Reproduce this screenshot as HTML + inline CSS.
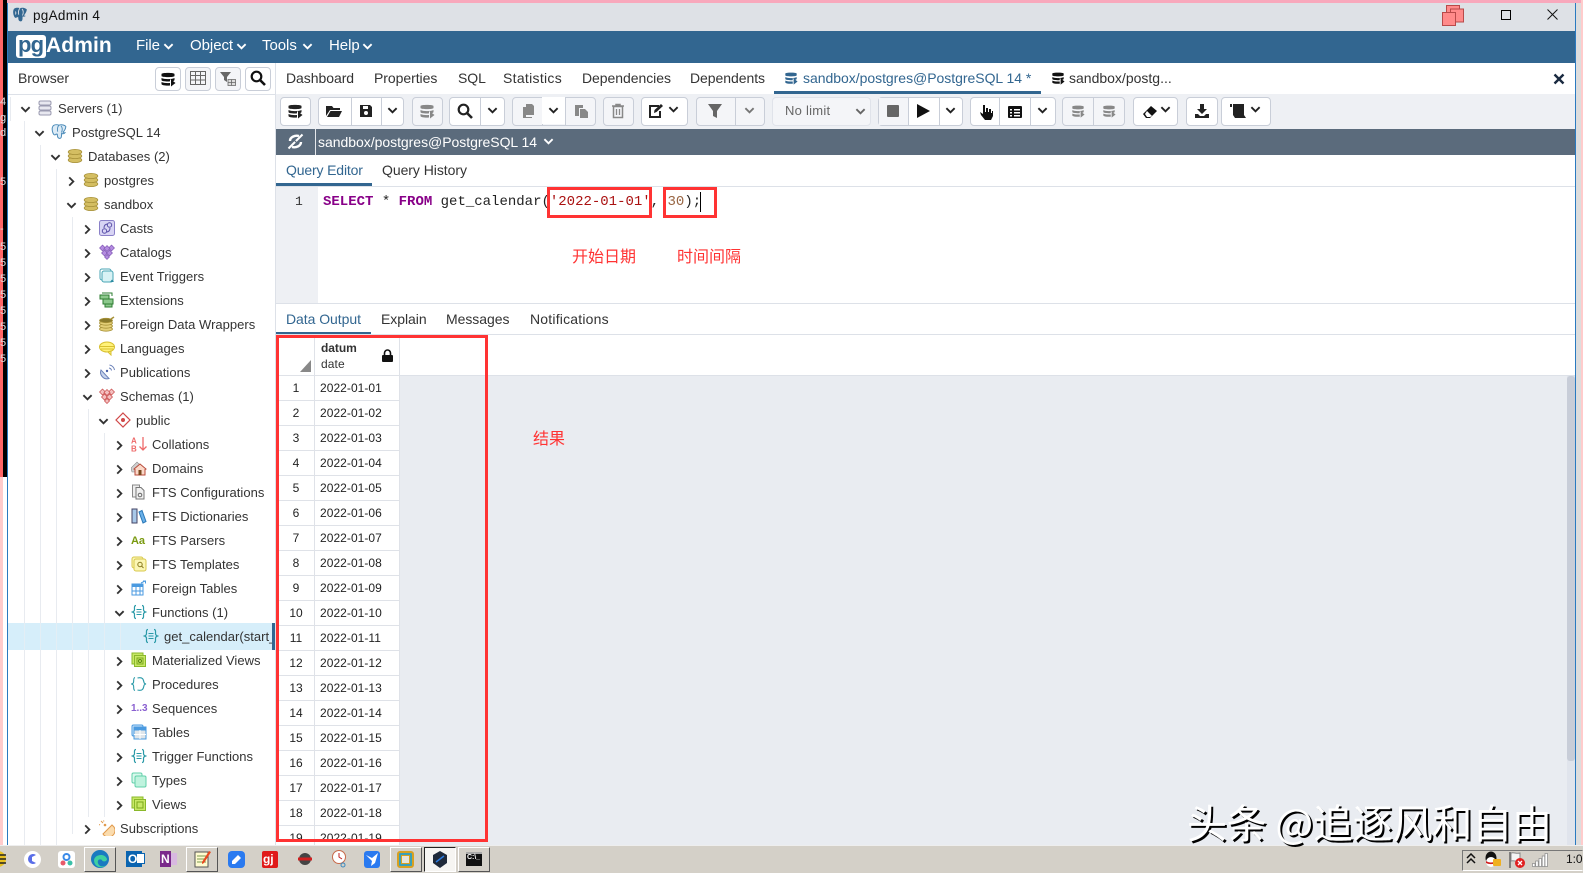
<!DOCTYPE html>
<html><head><meta charset="utf-8"><title>pgAdmin 4</title>
<style>
html,body{margin:0;padding:0;width:1583px;height:873px;overflow:hidden;background:#fff}
body{position:relative;font-family:"Liberation Sans","Noto Sans CJK SC",sans-serif;color:#222}
.a,.t,.r,.i,.b,.c,.n,.d,.g,.tb{position:absolute}
.t{white-space:nowrap;font-size:14px;line-height:18px;letter-spacing:-.05px}
.r{font-size:13px;line-height:24px;white-space:nowrap;color:#333;letter-spacing:.02px}
.g{width:1px;background:#e8ebf0}
.i{width:16px;height:16px}
.b{top:97px;height:27px;border:1px solid #c9ced8;border-radius:4px;background:#fff;box-sizing:content-box}
.b.dis{background:#f4f5f8}
.b i{position:absolute;top:0;bottom:0;width:1px;background:#c9ced8}
.c{width:11px;height:11px}
.n{left:278px;width:36px;height:24px;background:#fff;font-size:12px;line-height:24px;text-align:center;color:#222}
.d{left:315px;width:84px;height:24px;background:#fff;font-size:12px;line-height:24px;color:#222;text-indent:5px;letter-spacing:.05px}
.tb{top:845px}
.btn3{position:absolute;top:847px;height:25px;box-sizing:border-box;width:32px;border:1px solid;border-color:#fff #555 #555 #fff;background:#d4d0c8}
.red{position:absolute;border:3px solid #f33;box-sizing:border-box}
.zh{position:absolute;color:#f33;font-size:16px;line-height:20px;font-family:"Noto Sans CJK SC",sans-serif;white-space:nowrap}
.stripe{position:absolute;left:0;font-size:11px;line-height:12px;color:#ddd;font-family:"Liberation Sans",sans-serif}
</style></head><body>
<svg width="0" height="0" style="position:absolute">
<defs>
<symbol id="dn" viewBox="0 0 12 12"><path d="M1.500 3.500 6 8l4.500-4.500" fill="none" stroke="currentColor" stroke-width="2"/></symbol>
<symbol id="rt" viewBox="0 0 12 12"><path d="M3.500 1.500 8 6l-4.500 4.500" fill="none" stroke="currentColor" stroke-width="2"/></symbol>
<symbol id="db" viewBox="0 0 16 16"><g fill="#d4be62" stroke="#a8923a" stroke-width=".8"><ellipse cx="8" cy="12" rx="6.800" ry="2.600"/><ellipse cx="8" cy="8" rx="6.800" ry="2.600"/><ellipse cx="8" cy="4" rx="6.800" ry="2.600"/></g></symbol>
<symbol id="srv" viewBox="0 0 16 16"><g fill="#e8e8f0" stroke="#9a9ab0"><rect x="2" y="1" width="12" height="4" rx="1.500"/><rect x="2" y="6" width="12" height="4" rx="1.500"/><rect x="2" y="11" width="12" height="4" rx="1.500"/></g></symbol>
<symbol id="pg" viewBox="0 0 16 16"><path d="M8 1.200C6.500.6 4 .5 2.600 1.400.8 2.600.9 6 1.800 8.600c.5 1.500 1.300 2.600 2.400 2.200.5-.2.8-.5 1-.8.4.3.8.4 1.100.3 0 1.500 0 3.500 1.700 4 1.600.4 2.400-.6 2.500-2.400l.1-2.400c1.200.4 2.600.1 3.300-.7-.9.1-1.500-.1-1.800-.6 1.300-1.500 2.700-4 2.700-5.800C14 1.500 11 0 8 1.200z" fill="#dcebf6" stroke="#4a8ab8" stroke-width="1"/><path d="M8 1.200c-1.500 1.500-1.800 4-1.300 6.500M10 2c1.500 1.500 1.500 4 .5 6.500" fill="none" stroke="#4a8ab8" stroke-width=".9"/></symbol>
<symbol id="pgd" viewBox="0 0 16 16"><path d="M8 1.200C6.500.6 4 .5 2.600 1.400.8 2.600.9 6 1.800 8.600c.5 1.500 1.300 2.600 2.400 2.200.5-.2.8-.5 1-.8.4.3.8.4 1.100.3 0 1.500 0 3.500 1.700 4 1.600.4 2.400-.6 2.500-2.400l.1-2.400c1.200.4 2.600.1 3.300-.7-.9.1-1.500-.1-1.800-.6 1.300-1.500 2.700-4 2.700-5.800C14 1.500 11 0 8 1.200z" fill="#336791"/><path d="M8 1.200c-1.500 1.500-1.800 4-1.300 6.500M10 2c1.500 1.500 1.500 4 .5 6.500M3.500 4.500c.5 1 .5 2 0 3" fill="none" stroke="#dee1e6" stroke-width=".9"/></symbol>
<symbol id="cast" viewBox="0 0 16 16"><rect x=".5" y=".5" width="15" height="15" rx="2" fill="#d8d4f4" stroke="#8a80c8"/><circle cx="10.500" cy="5" r="2.200" fill="none" stroke="#5a50a8"/><circle cx="5.500" cy="11" r="2.200" fill="none" stroke="#5a50a8"/><path d="M5 8c0-3 2-4 4-4M11 8c0 3-2 4-4 4" fill="none" stroke="#5a50a8"/></symbol>
<symbol id="cat" viewBox="0 0 16 16"><g fill="#b48ce0" stroke="#7a50b0" stroke-width=".6"><path d="M3.500 1 6.500 4 3.500 7 .5 4z"/><path d="M12.500 1l3 3-3 3-3-3z"/><path d="M8 1.500 11 4.500 8 7.500 5 4.500z"/><path d="M5.500 6 8.500 9 5.500 12 2.500 9z"/><path d="M10.500 6l3 3-3 3-3-3z"/><path d="M8 10.500 10.500 13 8 15.500 5.500 13z"/></g></symbol>
<symbol id="sch" viewBox="0 0 16 16"><g fill="#f4c0c0" stroke="#c84848" stroke-width=".7"><path d="M3.500 1 6.500 4 3.500 7 .5 4z"/><path d="M12.500 1l3 3-3 3-3-3z"/><path d="M8 1.500 11 4.500 8 7.500 5 4.500z"/><path d="M5.500 6 8.500 9 5.500 12 2.500 9z"/><path d="M10.500 6l3 3-3 3-3-3z"/><path d="M8 10.500 10.500 13 8 15.500 5.500 13z"/></g></symbol>
<symbol id="ev" viewBox="0 0 16 16"><rect x="1" y="1" width="11" height="11" rx="2" fill="#fff" stroke="#49a5b5"/><rect x="3" y="3" width="11" height="11" rx="2" fill="#d8f2f5" stroke="#49a5b5"/><path d="M11 14h4l-2-2.500z" fill="#2a8aa0"/></symbol>
<symbol id="ext" viewBox="0 0 16 16"><path d="M1 3h9v4H1zM4 7h10v5H4zM6 12h7v3H6z" fill="#8cc88c" stroke="#2e7d32"/><path d="M3 1h10v3" fill="none" stroke="#2e7d32"/></symbol>
<symbol id="fdw" viewBox="0 0 16 16"><g fill="#e4cf78" stroke="#a89238" stroke-width=".8"><ellipse cx="7" cy="13" rx="6.500" ry="2.200"/><ellipse cx="7" cy="10" rx="6.500" ry="2.200"/><ellipse cx="7" cy="7" rx="6.500" ry="2.200"/><ellipse cx="7" cy="4.500" rx="6.500" ry="2.200" fill="#8a7a2c"/></g><path d="M12 3 15 1" stroke="#a89238" stroke-width="1.500"/></symbol>
<symbol id="lang" viewBox="0 0 16 16"><ellipse cx="8" cy="7" rx="7.500" ry="5" fill="#fff27a" stroke="#d8c030"/><path d="M1 6.500h14M2 9h12" stroke="#d8c030" fill="none"/><path d="M9 12l3 3v-4z" fill="#fff27a" stroke="#d8c030"/></symbol>
<symbol id="pub" viewBox="0 0 16 16"><path d="M2 6a6.500 6.500 0 0 0 8 8.500z" fill="#c8d4ec" stroke="#6a80b8"/><circle cx="8" cy="7" r="1.200" fill="#4a60a8"/><path d="M10 4a3 3 0 0 1 2.500 2.500M10.500 1a6 6 0 0 1 5 5" fill="none" stroke="#6a80b8"/></symbol>
<symbol id="pub2" viewBox="0 0 16 16"><path d="M15 7a6.500 6.500 0 0 1-11 7L13 5z" fill="#fbdcae" stroke="#e09a4c"/><circle cx="6" cy="5" r="1.300" fill="#e09a4c"/><path d="M4 3 2 1M1 5l-1-.5M5 1.500 4.500.5" stroke="#e09a4c" fill="none"/></symbol>
<symbol id="pub3" viewBox="0 0 16 16"><path d="M8 1 15 8 8 15 1 8z" fill="#fff" stroke="#d04848" stroke-width="1.200"/><circle cx="8" cy="8" r="2" fill="#d04848"/></symbol>
<symbol id="coll" viewBox="0 0 16 16"><text x="0" y="7.500" font-size="8" font-weight="bold" fill="#ee6a6a" font-family="Liberation Sans">A</text><text x="0" y="15.500" font-size="8" font-weight="bold" fill="#ee6a6a" font-family="Liberation Sans">B</text><path d="M12 1v13M8.500 10.500 12 14l3.500-3.500" fill="none" stroke="#ee6a6a" stroke-width="1.300"/></symbol>
<symbol id="dom" viewBox="0 0 16 16"><path d="M0 8 6 2l3 3-5 4v3H1z" fill="#d0d0d0" stroke="#888" stroke-width=".6"/><path d="M3 9l6-5 6 5-1 .5V15H4V9.500z" fill="#fbd8c8" stroke="#b84a3a"/><rect x="7.500" y="10" width="3" height="5" fill="#7a4a20"/></symbol>
<symbol id="cfg" viewBox="0 0 16 16"><rect x="1.500" y="1" width="7" height="12" fill="#eee" stroke="#888"/><path d="M5 3.500h5l3 3V15H5z" fill="#f0f0f0" stroke="#777"/><circle cx="9" cy="11" r="1.800" fill="none" stroke="#666"/></symbol>
<symbol id="dic" viewBox="0 0 16 16"><rect x="1" y="1" width="5" height="14" fill="#a8c8e8" stroke="#446"/><path d="M8 4l3-1.500 4 11-3 1.500z" fill="#6ab0e8" stroke="#2a78b8"/></symbol>
<symbol id="tpl" viewBox="0 0 16 16"><rect x="1" y="1" width="11" height="11" rx="2" fill="#fbf6b4" stroke="#d8c84c"/><rect x="3" y="3" width="12" height="12" rx="2" fill="#fbf6b4" stroke="#d8c84c"/><circle cx="9" cy="8.500" r="2.200" fill="none" stroke="#8a7a20"/><path d="M10.500 10l2 2" stroke="#8a7a20"/></symbol>
<symbol id="ftb" viewBox="0 0 16 16"><rect x="1" y="4" width="11" height="11" fill="#fff" stroke="#4a9ae0"/><path d="M1 4h11v3H1z" fill="#4a9ae0"/><path d="M5 7v8M1 11h11M9 7v8" stroke="#4a9ae0" fill="none"/><path d="M10 3l4-2M12 1h2.500v2.500" fill="none" stroke="#4a9ae0"/></symbol>
<symbol id="fn" viewBox="0 0 16 16"><path d="M5 1.500C3 1.500 3.500 4 3.500 5.500S3 7.500 1.500 8C3 8.500 3.500 9 3.500 10.500S3 14.500 5 14.500M11 1.500c2 0 1.500 2.500 1.500 4S13 7.500 14.500 8C13 8.500 12.500 9 12.500 10.500s.5 4-1.500 4" fill="none" stroke="#2a9aa8" stroke-width="1.200"/><path d="M5.500 5.500h5M5.500 8h5M5.500 10.500h5" stroke="#2a9aa8" fill="none"/></symbol>
<symbol id="fn2" viewBox="0 0 16 16"><path d="M4 1.500C2 2 3 5 2.500 6.500 2.300 7.400 1.500 7.700.5 8c1 .3 1.800.6 2 1.500C3 11 2 14 4 14.500M6.500 2c5.500-1.500 6 2 6.500 4.500.2 1 1 1.300 2 1.500-1 .2-1.800.5-2 1.500-.5 2.500-1 6-6.500 4.500" fill="none" stroke="#2a9aa8" stroke-width="1.100"/></symbol>
<symbol id="mv" viewBox="0 0 16 16"><rect x="1" y="1" width="11" height="11" fill="#c8e866" stroke="#8ab82a"/><rect x="3.500" y="3.500" width="11" height="11" fill="#c8e866" stroke="#8ab82a"/><rect x="6" y="6" width="6" height="6" fill="none" stroke="#7aa81a"/><circle cx="9" cy="9" r="1.500" fill="none" stroke="#5a8a10"/></symbol>
<symbol id="tb" viewBox="0 0 16 16"><rect x="1" y="1" width="11" height="11" rx="1.500" fill="#cfe6fa" stroke="#4a9ae0"/><rect x="3" y="3" width="12" height="12" fill="#dfe5ea" stroke="#4a9ae0"/><path d="M3 3h12v3.500H3z" fill="#4a9ae0"/><path d="M9 6v9M3 10.500h12" stroke="#fff" fill="none"/></symbol>
<symbol id="ty" viewBox="0 0 16 16"><rect x="1" y="1" width="10" height="10" rx="1.500" fill="#d8f8ec" stroke="#62d0aa"/><rect x="4" y="4" width="11" height="11" rx="1.500" fill="#bff3de" stroke="#62d0aa"/></symbol>
<symbol id="vw" viewBox="0 0 16 16"><rect x="1" y="1" width="11" height="11" fill="#c8e866" stroke="#8ab82a"/><rect x="3.500" y="3.500" width="11" height="11" fill="#c8e866" stroke="#8ab82a"/><rect x="6" y="6" width="6" height="6" fill="none" stroke="#7aa81a"/></symbol>
<symbol id="dbb" viewBox="0 0 16 16"><path d="M1.500 3C1.500 1.500 14.500 1.500 14.500 3v2c0 1.500-13 1.500-13 0zM1.500 7c3 1.500 10 1.500 13 0v2c0 .5-1 1-2 1.200L10 8v2.400c-3 .3-8.500 0-8.500-1.400zM1.500 11c2 1 6 1.200 8.500 1v2.500c-3 .3-8.500 0-8.500-1.500zM11 8.500l4.500 3.500-4.500 3.500z" fill="currentColor"/></symbol>
</defs>
</svg>

<!-- frame -->
<div class="a" style="left:0;top:0;width:1583px;height:3px;background:#f8a8bc"></div>
<div class="a" style="left:0;top:0;width:3px;height:477px;background:#f66"></div>
<div class="a" style="left:3px;top:0;width:4px;height:477px;background:#000"></div>
<div class="a" style="left:0;top:477px;width:3px;height:368px;background:#fcc"></div>
<div class="a" style="left:7px;top:3px;width:1px;height:842px;background:#2a7ac0"></div>
<div class="a" style="left:1575px;top:3px;width:1px;height:842px;background:#2a7ac0"></div>
<div class="a" style="left:1576px;top:3px;width:5px;height:842px;background:#ddd"></div>
<div class="a" style="left:1581px;top:0;width:2px;height:845px;background:#fcc"></div>
<div class="stripe" style="top:96px">4</div><div class="stripe" style="top:112px">g</div><div class="stripe" style="top:127px">d</div><div class="stripe" style="top:176px">5</div><div class="stripe" style="top:223px">-</div><div class="stripe" style="top:241px">5</div><div class="stripe" style="top:257px">5</div><div class="stripe" style="top:273px">5</div><div class="stripe" style="top:289px">5</div><div class="stripe" style="top:305px">5</div><div class="stripe" style="top:321px">5</div><div class="stripe" style="top:337px">5</div><div class="stripe" style="top:353px">5</div>

<!-- title bar -->
<div class="a" style="left:8px;top:3px;width:1567px;height:28px;background:#dee1e6"></div>
<svg class="i" style="left:12px;top:7px"><use href="#pgd"/></svg>
<div class="t" style="left:33px;top:7px;font-size:13.5px;letter-spacing:.3px;color:#111">pgAdmin 4</div>
<svg class="a" style="left:1442px;top:4px" width="24" height="23" viewBox="0 0 24 23"><g fill="#ff8a8a" stroke="#b84a4a"><rect x="4.500" y="1.500" width="13" height="13"/><rect x="8.500" y="5" width="13" height="13"/><rect x=".5" y="8.500" width="13" height="13"/></g></svg>
<div class="a" style="left:1501px;top:10px;width:8px;height:8px;border:1px solid #000"></div>
<svg class="a" style="left:1547px;top:9px" width="11" height="11" viewBox="0 0 11 11"><path d="M.5.5l10 10M10.500.5l-10 10" stroke="#111"/></svg>

<!-- nav -->
<div class="a" style="left:8px;top:31px;width:1567px;height:32px;background:#326690"></div>
<div class="a" style="left:16px;top:35px;width:30px;height:23px;background:#fff;border-radius:3px"></div>
<div class="t" style="left:18px;top:33px;font-size:22px;line-height:24px;font-weight:bold;color:#326690;letter-spacing:-.8px">pg</div>
<div class="t" style="left:46px;top:34px;font-size:21px;line-height:24px;font-weight:bold;color:#fff;letter-spacing:.1px">Admin</div>
<div class="t" style="left:136px;top:37px;font-size:15px;color:#fff">File</div><svg class="c" style="left:163px;top:41px;color:#fff"><use href="#dn"/></svg>
<div class="t" style="left:190px;top:37px;font-size:15px;color:#fff">Object</div><svg class="c" style="left:236px;top:41px;color:#fff"><use href="#dn"/></svg>
<div class="t" style="left:262px;top:37px;font-size:15px;color:#fff">Tools</div><svg class="c" style="left:302px;top:41px;color:#fff"><use href="#dn"/></svg>
<div class="t" style="left:329px;top:37px;font-size:15px;color:#fff">Help</div><svg class="c" style="left:362px;top:41px;color:#fff"><use href="#dn"/></svg>

<!-- browser header -->
<div class="t" style="left:18px;top:69px;color:#333">Browser</div>
<div class="a" style="left:8px;top:94px;width:267px;height:1px;background:#dde1e8"></div>
<div class="a" style="left:275px;top:63px;width:1px;height:782px;background:#dde1e8"></div>
<div class="b" style="left:155px;top:67px;width:24px;height:22px"></div><svg class="i" style="left:160px;top:71px;color:#111"><use href="#dbb"/></svg>
<div class="b dis" style="left:185px;top:67px;width:24px;height:22px"></div><svg class="i" style="left:190px;top:70px" viewBox="0 0 16 16"><path d="M.5 1.500h15v13H.5zM.5 5.500h15M.5 10h15M5.500 1.500v13M10.500 1.500v13" fill="none" stroke="#666"/></svg>
<div class="b dis" style="left:215px;top:67px;width:24px;height:22px"></div><svg class="i" style="left:220px;top:71px" viewBox="0 0 16 16"><path d="M0 1h11L7 6v5L4 9V6z" fill="#666"/><path d="M8 8.500h7.500v6H8zM8 11.500h7.500M11.500 8.500v6" fill="#ddd" stroke="#666" stroke-width=".8"/></svg>
<div class="b" style="left:245px;top:67px;width:24px;height:22px"></div><svg class="i" style="left:250px;top:70px" viewBox="0 0 16 16"><circle cx="6.500" cy="6.500" r="4.800" fill="none" stroke="#111" stroke-width="2.200"/><path d="M10 10l5 5" stroke="#111" stroke-width="2.600"/></svg>

<!-- tree guides -->
<div class="g" style="left:10px;top:97px;height:24px"></div>
<div class="g" style="left:24px;top:121px;height:724px"></div>
<div class="g" style="left:40px;top:145px;height:700px"></div>
<div class="g" style="left:56px;top:169px;height:676px"></div>
<div class="g" style="left:72px;top:217px;height:617px"></div>
<div class="g" style="left:88px;top:409px;height:408px"></div>
<div class="g" style="left:104px;top:433px;height:384px"></div>
<!-- selected -->
<div class="a" style="left:8px;top:623px;width:264px;height:27px;background:#d6eefa"></div>
<div class="a" style="left:272px;top:623px;width:3px;height:27px;background:#326690"></div>
<div class="g" style="left:24px;top:623px;height:27px;background:#e3eef5"></div><div class="g" style="left:40px;top:623px;height:27px;background:#e3eef5"></div><div class="g" style="left:56px;top:623px;height:27px;background:#e3eef5"></div><div class="g" style="left:72px;top:623px;height:27px;background:#e3eef5"></div><div class="g" style="left:88px;top:623px;height:27px;background:#e3eef5"></div><div class="g" style="left:104px;top:623px;height:27px;background:#e3eef5"></div><div class="g" style="left:120px;top:623px;height:27px;background:#e3eef5"></div>

<!-- tree rows -->
<svg class="c" style="left:20px;top:104px;color:#333"><use href="#dn"/></svg><svg class="i" style="left:37px;top:100px"><use href="#srv"/></svg><div class="r" style="left:58px;top:97px">Servers (1)</div>
<svg class="c" style="left:34px;top:128px;color:#333"><use href="#dn"/></svg><svg class="i" style="left:51px;top:124px"><use href="#pg"/></svg><div class="r" style="left:72px;top:121px">PostgreSQL 14</div>
<svg class="c" style="left:50px;top:152px;color:#333"><use href="#dn"/></svg><svg class="i" style="left:67px;top:148px"><use href="#db"/></svg><div class="r" style="left:88px;top:145px">Databases (2)</div>
<svg class="c" style="left:66px;top:176px;color:#333"><use href="#rt"/></svg><svg class="i" style="left:83px;top:172px"><use href="#db"/></svg><div class="r" style="left:104px;top:169px">postgres</div>
<svg class="c" style="left:66px;top:200px;color:#333"><use href="#dn"/></svg><svg class="i" style="left:83px;top:196px"><use href="#db"/></svg><div class="r" style="left:104px;top:193px">sandbox</div>
<svg class="c" style="left:82px;top:224px;color:#333"><use href="#rt"/></svg><svg class="i" style="left:99px;top:220px"><use href="#cast"/></svg><div class="r" style="left:120px;top:217px">Casts</div>
<svg class="c" style="left:82px;top:248px;color:#333"><use href="#rt"/></svg><svg class="i" style="left:99px;top:244px"><use href="#cat"/></svg><div class="r" style="left:120px;top:241px">Catalogs</div>
<svg class="c" style="left:82px;top:272px;color:#333"><use href="#rt"/></svg><svg class="i" style="left:99px;top:268px"><use href="#ev"/></svg><div class="r" style="left:120px;top:265px">Event Triggers</div>
<svg class="c" style="left:82px;top:296px;color:#333"><use href="#rt"/></svg><svg class="i" style="left:99px;top:292px"><use href="#ext"/></svg><div class="r" style="left:120px;top:289px">Extensions</div>
<svg class="c" style="left:82px;top:320px;color:#333"><use href="#rt"/></svg><svg class="i" style="left:99px;top:316px"><use href="#fdw"/></svg><div class="r" style="left:120px;top:313px">Foreign Data Wrappers</div>
<svg class="c" style="left:82px;top:344px;color:#333"><use href="#rt"/></svg><svg class="i" style="left:99px;top:340px"><use href="#lang"/></svg><div class="r" style="left:120px;top:337px">Languages</div>
<svg class="c" style="left:82px;top:368px;color:#333"><use href="#rt"/></svg><svg class="i" style="left:99px;top:364px"><use href="#pub"/></svg><div class="r" style="left:120px;top:361px">Publications</div>
<svg class="c" style="left:82px;top:392px;color:#333"><use href="#dn"/></svg><svg class="i" style="left:99px;top:388px"><use href="#sch"/></svg><div class="r" style="left:120px;top:385px">Schemas (1)</div>
<svg class="c" style="left:98px;top:416px;color:#333"><use href="#dn"/></svg><svg class="i" style="left:115px;top:412px"><use href="#pub3"/></svg><div class="r" style="left:136px;top:409px">public</div>
<svg class="c" style="left:114px;top:440px;color:#333"><use href="#rt"/></svg><svg class="i" style="left:131px;top:436px"><use href="#coll"/></svg><div class="r" style="left:152px;top:433px">Collations</div>
<svg class="c" style="left:114px;top:464px;color:#333"><use href="#rt"/></svg><svg class="i" style="left:131px;top:460px"><use href="#dom"/></svg><div class="r" style="left:152px;top:457px">Domains</div>
<svg class="c" style="left:114px;top:488px;color:#333"><use href="#rt"/></svg><svg class="i" style="left:131px;top:484px"><use href="#cfg"/></svg><div class="r" style="left:152px;top:481px">FTS Configurations</div>
<svg class="c" style="left:114px;top:512px;color:#333"><use href="#rt"/></svg><svg class="i" style="left:131px;top:508px"><use href="#dic"/></svg><div class="r" style="left:152px;top:505px">FTS Dictionaries</div>
<svg class="c" style="left:114px;top:536px;color:#333"><use href="#rt"/></svg><div class="t" style="left:131px;top:532px;font-size:11px;font-weight:bold;color:#7a9a10;line-height:18px">Aa</div><div class="r" style="left:152px;top:529px">FTS Parsers</div>
<svg class="c" style="left:114px;top:560px;color:#333"><use href="#rt"/></svg><svg class="i" style="left:131px;top:556px"><use href="#tpl"/></svg><div class="r" style="left:152px;top:553px">FTS Templates</div>
<svg class="c" style="left:114px;top:584px;color:#333"><use href="#rt"/></svg><svg class="i" style="left:131px;top:580px"><use href="#ftb"/></svg><div class="r" style="left:152px;top:577px">Foreign Tables</div>
<svg class="c" style="left:114px;top:608px;color:#333"><use href="#dn"/></svg><svg class="i" style="left:131px;top:604px"><use href="#fn"/></svg><div class="r" style="left:152px;top:601px">Functions (1)</div>
<svg class="i" style="left:143px;top:628px"><use href="#fn"/></svg><div class="r" style="left:164px;top:625px;width:108px;overflow:hidden">get_calendar(start_date date, days integer)</div>
<svg class="c" style="left:114px;top:656px;color:#333"><use href="#rt"/></svg><svg class="i" style="left:131px;top:652px"><use href="#mv"/></svg><div class="r" style="left:152px;top:649px">Materialized Views</div>
<svg class="c" style="left:114px;top:680px;color:#333"><use href="#rt"/></svg><svg class="i" style="left:131px;top:676px"><use href="#fn2"/></svg><div class="r" style="left:152px;top:673px">Procedures</div>
<svg class="c" style="left:114px;top:704px;color:#333"><use href="#rt"/></svg><div class="t" style="left:131px;top:700px;font-size:10px;font-weight:bold;color:#8a60d0;line-height:18px">1..3</div><div class="r" style="left:152px;top:697px">Sequences</div>
<svg class="c" style="left:114px;top:728px;color:#333"><use href="#rt"/></svg><svg class="i" style="left:131px;top:724px"><use href="#tb"/></svg><div class="r" style="left:152px;top:721px">Tables</div>
<svg class="c" style="left:114px;top:752px;color:#333"><use href="#rt"/></svg><svg class="i" style="left:131px;top:748px"><use href="#fn"/></svg><div class="r" style="left:152px;top:745px">Trigger Functions</div>
<svg class="c" style="left:114px;top:776px;color:#333"><use href="#rt"/></svg><svg class="i" style="left:131px;top:772px"><use href="#ty"/></svg><div class="r" style="left:152px;top:769px">Types</div>
<svg class="c" style="left:114px;top:800px;color:#333"><use href="#rt"/></svg><svg class="i" style="left:131px;top:796px"><use href="#vw"/></svg><div class="r" style="left:152px;top:793px">Views</div>
<svg class="c" style="left:82px;top:824px;color:#333"><use href="#rt"/></svg><svg class="i" style="left:99px;top:820px"><use href="#pub2"/></svg><div class="r" style="left:120px;top:817px">Subscriptions</div>

<!-- top tabs -->
<div class="t" style="left:286px;top:69px;color:#333">Dashboard</div>
<div class="t" style="left:374px;top:69px;color:#333">Properties</div>
<div class="t" style="left:458px;top:69px;color:#333">SQL</div>
<div class="t" style="left:503px;top:69px;color:#333;letter-spacing:.3px">Statistics</div>
<div class="t" style="left:582px;top:69px;color:#333">Dependencies</div>
<div class="t" style="left:690px;top:69px;color:#333">Dependents</div>
<svg class="i" style="left:784px;top:71px;width:14px;height:14px;color:#326690"><use href="#dbb"/></svg>
<div class="t" style="left:803px;top:69px;color:#326690;letter-spacing:-.03px">sandbox/postgres@PostgreSQL 14 *</div>
<div class="a" style="left:774px;top:91px;width:267px;height:3px;background:#326690"></div>
<svg class="i" style="left:1051px;top:71px;width:14px;height:14px;color:#111"><use href="#dbb"/></svg>
<div class="t" style="left:1069px;top:69px;color:#333;letter-spacing:0">sandbox/postg...</div>
<svg class="a" style="left:1553px;top:73px" width="12" height="12" viewBox="0 0 12 12"><path d="M1.500 1.500l9 9M10.500 1.500l-9 9" stroke="#1a2a40" stroke-width="2.400"/></svg>

<!-- toolbar -->
<div class="a" style="left:276px;top:94px;width:1299px;height:35px;background:#eef0f4"></div>
<div class="b" style="left:280px;width:29px"></div><svg class="i" style="left:287px;top:103px;color:#222"><use href="#dbb"/></svg>
<div class="b" style="left:318px;width:84px"><i style="left:32px"></i><i style="left:62px"></i></div>
<svg class="i" style="left:326px;top:103px" viewBox="0 0 16 16"><path d="M0 3h6l1.500 2H14v2H4L0 13zM4.500 8H16l-3 6H1z" fill="#222"/></svg>
<svg class="i" style="left:358px;top:103px" viewBox="0 0 16 16"><path d="M2 2h10l2 2v10H2z" fill="#222"/><rect x="5" y="3" width="5" height="3" fill="#fff"/><circle cx="8" cy="10" r="2" fill="#fff"/></svg>
<svg class="c" style="left:387px;top:105px;color:#222"><use href="#dn"/></svg>
<div class="b dis" style="left:412px;width:29px"></div><svg class="i" style="left:419px;top:103px;color:#888"><use href="#dbb"/></svg>
<div class="b" style="left:449px;width:54px"><i style="left:30px"></i></div>
<svg class="i" style="left:457px;top:103px" viewBox="0 0 16 16"><circle cx="6.500" cy="6.500" r="4.800" fill="none" stroke="#222" stroke-width="2.200"/><path d="M10 10l5 5" stroke="#222" stroke-width="2.600"/></svg>
<svg class="c" style="left:487px;top:105px;color:#222"><use href="#dn"/></svg>
<div class="b dis" style="left:512px;width:82px"><i style="left:29px"></i><i style="left:52px"></i></div>
<div class="a" style="left:542px;top:97px;width:23px;height:27px;background:#fff"></div>
<svg class="i" style="left:520px;top:103px" viewBox="0 0 16 16"><path d="M6 1h6l2 2v9H6z" fill="#888"/><path d="M3 4h3v10h6v1H3z" fill="#888"/></svg>
<svg class="c" style="left:548px;top:105px;color:#222"><use href="#dn"/></svg>
<svg class="i" style="left:573px;top:103px" viewBox="0 0 16 16"><path d="M2 2h8v3H6v8H2z" fill="#888"/><path d="M7 6h5l3 3v6H7z" fill="#888"/></svg>
<div class="b dis" style="left:603px;width:29px"></div><svg class="i" style="left:610px;top:103px" viewBox="0 0 16 16"><path d="M2 3h12M6 3V1.500h4V3M3.500 3.500h9v11h-9z" fill="none" stroke="#888" stroke-width="1.500"/><path d="M6.500 6v6M9.500 6v6" stroke="#888" stroke-width="1.300"/></svg>
<div class="b" style="left:641px;width:45px"></div>
<svg class="i" style="left:648px;top:103px" viewBox="0 0 16 16"><path d="M11 3H2v11h10V8" fill="none" stroke="#222" stroke-width="2"/><path d="M6 10l.5-3L13 1l2 2-6.500 6z" fill="#222"/></svg>
<svg class="c" style="left:668px;top:104px;color:#222"><use href="#dn"/></svg>
<div class="b dis" style="left:696px;width:67px"><i style="left:38px"></i></div>
<svg class="i" style="left:707px;top:103px" viewBox="0 0 16 16"><path d="M1 1h14L10 8v7l-4-2V8z" fill="#666"/></svg>
<svg class="c" style="left:744px;top:105px;color:#777"><use href="#dn"/></svg>
<div class="b dis" style="left:772px;width:97px;border-color:#e0e3ea"></div>
<div class="t" style="left:785px;top:102px;font-size:13px;color:#666;letter-spacing:.25px">No limit</div>
<svg class="c" style="left:855px;top:106px;color:#666"><use href="#dn"/></svg>
<div class="b" style="left:878px;width:83px"><i style="left:29px"></i><i style="left:60px"></i></div>
<div class="a" style="left:879px;top:98px;width:29px;height:27px;background:#f4f5f8"></div>
<div class="a" style="left:887px;top:105px;width:12px;height:12px;background:#666;border-radius:1px"></div>
<svg class="a" style="left:917px;top:104px" width="13" height="14" viewBox="0 0 13 14"><path d="M0 0l13 7-13 7z" fill="#111"/></svg>
<svg class="c" style="left:945px;top:105px;color:#222"><use href="#dn"/></svg>
<div class="b" style="left:970px;width:84px"><i style="left:28px"></i><i style="left:59px"></i></div>
<svg class="i" style="left:978px;top:104px" viewBox="0 0 16 16"><path d="M5 1h2v7h1V4h2v4h1V5h2v4h1V7h1v5l-2 4H7L3 11l-1-3 3 2z" fill="#111"/></svg>
<svg class="i" style="left:1007px;top:104px" viewBox="0 0 16 16"><rect x="1" y="2" width="14" height="12" rx="1" fill="#111"/><path d="M3 5h2v1.500H3zM7 5h6v1.500H7zM3 8h2v1.500H3zM7 8h6v1.500H7zM3 11h2v1.500H3zM7 11h6v1.500H7z" fill="#fff"/></svg>
<svg class="c" style="left:1037px;top:105px;color:#222"><use href="#dn"/></svg>
<div class="b dis" style="left:1062px;width:61px"><i style="left:30px"></i></div>
<svg class="i" style="left:1071px;top:104px;width:14px;height:14px;color:#888"><use href="#dbb"/></svg>
<svg class="i" style="left:1102px;top:104px;width:14px;height:14px;color:#888"><use href="#dbb"/></svg>
<div class="b" style="left:1133px;width:43px"></div>
<svg class="i" style="left:1142px;top:104px" viewBox="0 0 16 16"><path d="M9 2l6 5-7 7H4L1 10z" fill="#111"/><path d="M5 7l5 5-2 1H5l-2-3z" fill="#fff"/></svg>
<svg class="c" style="left:1160px;top:104px;color:#222"><use href="#dn"/></svg>
<div class="b" style="left:1186px;width:30px"></div>
<svg class="i" style="left:1194px;top:103px" viewBox="0 0 16 16"><path d="M6 1h4v5h3l-5 5-5-5h3z" fill="#222"/><path d="M1 11h3l2 2h4l2-2h3v4H1z" fill="#222"/></svg>
<div class="b" style="left:1221px;width:48px"></div>
<svg class="i" style="left:1230px;top:103px" viewBox="0 0 16 16"><path d="M0 1h2v3H0zM3 1h11v11l2 3H5l-2-3z" fill="#222"/></svg>
<svg class="c" style="left:1250px;top:104px;color:#222"><use href="#dn"/></svg>

<!-- connection bar -->
<div class="a" style="left:276px;top:129px;width:1299px;height:26px;background:#5b6b7c"></div>
<div class="a" style="left:315px;top:129px;width:1px;height:26px;background:#e5e8ec"></div>
<svg class="a" style="left:287px;top:133px" width="17" height="17" viewBox="0 0 17 17"><path d="M1.500 15.500 15.500 1.500" stroke="#fff" stroke-width="2"/><path d="M3 8c0-4 5-6 9-5M14 9c0 4-5 6-9 5" fill="none" stroke="#fff" stroke-width="2.400"/><path d="M6 6l5 5" stroke="#5b6b7c" stroke-width="1.200"/></svg>
<div class="t" style="left:318px;top:133px;color:#fff;letter-spacing:-.03px">sandbox/postgres@PostgreSQL 14</div>
<svg class="c" style="left:543px;top:136px;color:#fff"><use href="#dn"/></svg>

<!-- query tabs -->
<div class="t" style="left:286px;top:161px;color:#326690;letter-spacing:-.15px">Query Editor</div>
<div class="t" style="left:382px;top:161px;color:#333">Query History</div>
<div class="a" style="left:276px;top:183px;width:96px;height:3px;background:#326690"></div>
<div class="a" style="left:276px;top:186px;width:1299px;height:1px;background:#dde1e8"></div>

<!-- editor -->
<div class="a" style="left:276px;top:187px;width:42px;height:116px;background:#eef0f4"></div>
<div class="t" style="left:295px;top:193px;font-size:13px;color:#333;font-family:'Liberation Mono',monospace">1</div>
<div class="t" style="left:323px;top:193px;font-family:'Liberation Mono',monospace;font-size:14px;letter-spacing:0;color:#222"><b style="color:#808">SELECT</b> * <b style="color:#808">FROM</b> get_calendar(<span style="color:#a11">'2022-01-01'</span>, <span style="color:#964">30</span>);</div>
<div class="a" style="left:700px;top:192px;width:1px;height:20px;background:#000"></div>
<div class="red" style="left:547px;top:187px;width:105px;height:31px"></div>
<div class="red" style="left:663px;top:187px;width:54px;height:31px"></div>
<div class="zh" style="left:572px;top:245px">开始日期</div>
<div class="zh" style="left:677px;top:245px">时间间隔</div>

<!-- data tabs -->
<div class="a" style="left:276px;top:303px;width:1299px;height:1px;background:#dde1e8"></div>
<div class="t" style="left:286px;top:310px;color:#326690">Data Output</div>
<div class="t" style="left:381px;top:310px;color:#333">Explain</div>
<div class="t" style="left:446px;top:310px;color:#333">Messages</div>
<div class="t" style="left:530px;top:310px;color:#333;letter-spacing:.2px">Notifications</div>
<div class="a" style="left:276px;top:332px;width:95px;height:2px;background:#326690"></div>
<div class="a" style="left:276px;top:334px;width:1299px;height:1px;background:#dde1e8"></div>

<!-- grid -->
<div class="a" style="left:276px;top:375px;width:1299px;height:470px;background:#e9ecf1"></div>
<div class="a" style="left:276px;top:375px;width:1299px;height:1px;background:#dde1e8"></div>
<div class="a" style="left:1567px;top:376px;width:8px;height:469px;background:#e0e4ec"></div>
<div class="a" style="left:1567px;top:376px;width:8px;height:385px;background:#c8cdd8;border-radius:3px"></div>
<div class="a" style="left:276px;top:336px;width:2px;height:509px;background:#fff"></div>
<div class="a" style="left:314px;top:336px;width:1px;height:39px;background:#dfe2e8"></div>
<div class="a" style="left:399px;top:336px;width:1px;height:39px;background:#dfe2e8"></div>
<div class="a" style="left:278px;top:375px;width:122px;height:470px;background:#dfe2e8"></div>
<svg class="a" style="left:300px;top:360px" width="11" height="12"><path d="M11 0v12H0z" fill="#888"/></svg>
<div class="t" style="left:321px;top:340px;font-size:12px;font-weight:bold;color:#333;line-height:16px">datum</div>
<div class="t" style="left:321px;top:356px;font-size:12px;color:#333;line-height:16px;letter-spacing:.1px">date</div>
<svg class="a" style="left:381px;top:349px" width="13" height="13" viewBox="0 0 13 13"><path d="M3.500 6V4a3 3 0 0 1 6 0v2" fill="none" stroke="#111" stroke-width="1.600"/><rect x="1" y="6" width="11" height="7" rx="1" fill="#111"/></svg>

<div class="n" style="top:376px">1</div><div class="d" style="top:376px">2022-01-01</div>
<div class="n" style="top:401px">2</div><div class="d" style="top:401px">2022-01-02</div>
<div class="n" style="top:426px">3</div><div class="d" style="top:426px">2022-01-03</div>
<div class="n" style="top:451px">4</div><div class="d" style="top:451px">2022-01-04</div>
<div class="n" style="top:476px">5</div><div class="d" style="top:476px">2022-01-05</div>
<div class="n" style="top:501px">6</div><div class="d" style="top:501px">2022-01-06</div>
<div class="n" style="top:526px">7</div><div class="d" style="top:526px">2022-01-07</div>
<div class="n" style="top:551px">8</div><div class="d" style="top:551px">2022-01-08</div>
<div class="n" style="top:576px">9</div><div class="d" style="top:576px">2022-01-09</div>
<div class="n" style="top:601px">10</div><div class="d" style="top:601px">2022-01-10</div>
<div class="n" style="top:626px">11</div><div class="d" style="top:626px">2022-01-11</div>
<div class="n" style="top:651px">12</div><div class="d" style="top:651px">2022-01-12</div>
<div class="n" style="top:676px">13</div><div class="d" style="top:676px">2022-01-13</div>
<div class="n" style="top:701px">14</div><div class="d" style="top:701px">2022-01-14</div>
<div class="n" style="top:726px">15</div><div class="d" style="top:726px">2022-01-15</div>
<div class="n" style="top:751px">16</div><div class="d" style="top:751px">2022-01-16</div>
<div class="n" style="top:776px">17</div><div class="d" style="top:776px">2022-01-17</div>
<div class="n" style="top:801px">18</div><div class="d" style="top:801px">2022-01-18</div>
<div class="n" style="top:826px;height:19px">19</div><div class="d" style="top:826px;height:19px;overflow:hidden">2022-01-19</div>
<div class="red" style="left:276px;top:335px;width:212px;height:507px;z-index:2;background:none"></div>
<div class="zh" style="left:533px;top:427px">结果</div>

<!-- taskbar -->
<div class="a" style="left:0;top:845px;width:1583px;height:28px;background:#d4d0c8;border-top:1px solid #eee;box-sizing:border-box;z-index:3"></div>
<div style="position:absolute;left:0;top:0;width:1583px;height:873px;z-index:4">
<svg class="a" style="left:-10px;top:851px" width="16" height="16"><circle cx="8" cy="8" r="8" fill="#e8c020"/><path d="M8 4h8M8 8h8M8 12h8" stroke="#222" stroke-width="1.500"/></svg>
<svg class="a" style="left:24px;top:851px" width="17" height="17"><circle cx="8.500" cy="8.500" r="8.500" fill="#fff"/><path d="M12 4a5 5 0 1 0 0 8l-4-2V6z" fill="#5a6ee8"/></svg>
<div class="a" style="left:58px;top:851px;width:17px;height:17px;background:#fff;border-radius:3px"></div>
<svg class="a" style="left:59px;top:852px" width="15" height="15"><circle cx="7.500" cy="5" r="3" fill="none" stroke="#3a8ae8" stroke-width="2"/><circle cx="4" cy="11" r="2.500" fill="#e85a6a"/><circle cx="11" cy="11" r="2.500" fill="#3ac0a8"/></svg>
<div class="btn3" style="left:84px"></div>
<svg class="a" style="left:91px;top:850px" width="18" height="18"><circle cx="9" cy="9" r="9" fill="#1a7ac0"/><path d="M3 10c1-6 11-7 13-1 0 3-5 3-5 1-3-2-6 1-3 5 1 1.500 5 2 7 0-3 4-12 3-12-5z" fill="#3fd0a0"/></svg>
<div class="a" style="left:126px;top:851px;width:16px;height:16px;background:#0a64b0"></div>
<div class="a" style="left:136px;top:853px;width:9px;height:11px;background:#fff;border:1px solid #0a64b0;box-sizing:border-box"></div>
<div class="t" style="left:128px;top:850px;font-size:12px;font-weight:bold;color:#fff">O</div>
<div class="a" style="left:160px;top:851px;width:11px;height:16px;background:#7a2a8a"></div>
<div class="a" style="left:171px;top:853px;width:6px;height:12px;background:#d8b8e0"></div>
<div class="t" style="left:161px;top:850px;font-size:12px;font-weight:bold;color:#fff">N</div>
<div class="btn3" style="left:186px"></div>
<svg class="a" style="left:194px;top:850px" width="17" height="18"><rect x="1" y="2" width="13" height="15" fill="#fffbd0" stroke="#555"/><path d="M3 6h9M3 9h9M3 12h9" stroke="#7a9a50"/><path d="M15 1l2 1-7 11-2 1 0-2z" fill="#e84a20"/></svg>
<div class="a" style="left:228px;top:851px;width:17px;height:17px;background:#2a7af0;border-radius:4px"></div>
<svg class="a" style="left:231px;top:854px" width="11" height="11"><path d="M1 7l6-6 3 3-6 6H1z" fill="#fff"/></svg>
<div class="a" style="left:262px;top:851px;width:16px;height:17px;background:#e01a1a;border-radius:2px"></div>
<div class="t" style="left:263px;top:850px;font-size:12px;font-weight:bold;color:#fff">gj</div>
<svg class="a" style="left:297px;top:851px" width="16" height="16"><circle cx="8" cy="8" r="6" fill="#444"/><path d="M1 8h14" stroke="#d02020" stroke-width="3"/></svg>
<svg class="a" style="left:331px;top:850px" width="18" height="18"><circle cx="8" cy="7" r="6.500" fill="#fff" stroke="#c86a4a"/><path d="M8 3v4l3 2" stroke="#c02020" fill="none"/><circle cx="12" cy="15" r="2" fill="none" stroke="#3a8ac0"/></svg>
<div class="a" style="left:364px;top:851px;width:16px;height:17px;background:#2a7af0;border-radius:3px"></div>
<svg class="a" style="left:366px;top:853px" width="12" height="13"><path d="M0 2l6 3 6-5-3 10-4 3 1-5z" fill="#fff"/></svg>
<div class="btn3" style="left:390px"></div>
<div class="a" style="left:397px;top:851px;width:17px;height:17px;background:#3aa0b8;border:2px solid #d8a020;box-sizing:border-box;border-radius:3px"></div>
<div class="a" style="left:401px;top:855px;width:9px;height:9px;background:#e8e4d8;border:1px solid #d8a020;box-sizing:border-box"></div>
<div class="btn3" style="left:424px;background:#f6f5f2;border-color:#222 #fff #fff #222"></div>
<svg class="a" style="left:432px;top:851px" width="16" height="17"><path d="M8 0l7 4v8l-7 5-7-5V4z" fill="#1f2a3a"/><path d="M4 11 12 5" stroke="#2a7ae0" stroke-width="1.500"/></svg>
<div class="btn3" style="left:458px"></div>
<div class="a" style="left:466px;top:852px;width:16px;height:14px;background:#111;border-top:2px solid #aaa;box-sizing:border-box"></div>
<div class="t" style="left:467px;top:851px;font-size:7px;font-weight:bold;color:#fff;line-height:14px">C:\_</div>
<div class="a" style="left:1462px;top:850px;width:121px;height:21px;border:1px solid;border-color:#777 #d4d0c8 #fff #777;box-sizing:border-box"></div>
<svg class="a" style="left:1466px;top:853px" width="10" height="12"><path d="M1 5l4-4 4 4M1 10l4-4 4 4" fill="none" stroke="#111" stroke-width="1.500"/></svg>
<svg class="a" style="left:1484px;top:851px" width="17" height="18"><ellipse cx="7" cy="7" rx="5.500" ry="6.500" fill="#111"/><ellipse cx="7" cy="11" rx="5" ry="5" fill="#fff"/><path d="M2 10c3 2 7 2 10 0v2c-3 1.500-7 1.500-10 0z" fill="#d02020"/><rect x="9" y="8" width="8" height="7" rx="1" fill="#f0b020"/></svg>
<svg class="a" style="left:1508px;top:851px" width="17" height="18"><path d="M2 1v16" stroke="#666" stroke-width="1.500"/><path d="M3 2c3-1 5 1 9 0v8c-4 1-6-1-9 0z" fill="#f4f4f4" stroke="#888"/><circle cx="12" cy="12" r="5" fill="#e02020"/><path d="M10 10l4 4M14 10l-4 4" stroke="#fff" stroke-width="1.300"/></svg>
<svg class="a" style="left:1532px;top:853px" width="16" height="14"><g fill="#fff" stroke="#888" stroke-width=".7"><rect x=".5" y="10.500" width="2.500" height="3"/><rect x="3.700" y="8" width="2.500" height="5.500"/><rect x="7" y="5.500" width="2.500" height="8"/><rect x="10.200" y="3" width="2.500" height="10.500"/><rect x="13" y=".5" width="2.500" height="13"/></g></svg>
<div class="t" style="left:1566px;top:851px;font-size:12px;color:#111;line-height:16px">1:0</div>
</div>

<!-- watermark -->
<div style="position:absolute;left:1187px;top:796px;z-index:5;font-family:'Noto Sans CJK SC',sans-serif;font-size:40px;line-height:50px;color:#fff;white-space:nowrap;text-shadow:2px 2px 0 #000;letter-spacing:-.2px">头条 @追逐风和自由</div>
</body></html>
